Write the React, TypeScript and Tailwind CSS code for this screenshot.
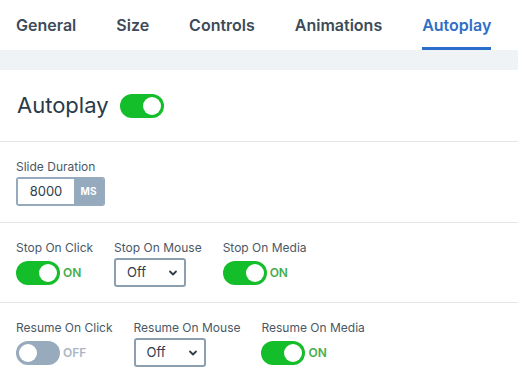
import React from "react";

const tabs = ["General", "Size", "Controls", "Animations", "Autoplay"];

function Toggle({ on }: { on: boolean }) {
  return (
    <span
      className={`relative inline-flex h-[24px] w-[44px] shrink-0 items-center rounded-full ${
        on ? "bg-[#14bd2a]" : "bg-[#97abbd]"
      }`}
    >
      <span
        className={`absolute top-[3px] h-[18px] w-[18px] rounded-full bg-white ${
          on ? "left-[23px]" : "left-[3px]"
        }`}
      />
    </span>
  );
}

function Switch({ on }: { on: boolean }) {
  return (
    <div className="flex h-[29px] items-center gap-[3px]">
      <Toggle on={on} />
      <span
        className={`text-[12px] font-semibold ${
          on ? "text-[#46ad4c]" : "text-[#a9b7c4]"
        }`}
      >
        {on ? "ON" : "OFF"}
      </span>
    </div>
  );
}

function Select() {
  return (
    <div className="flex h-[29px] w-[72px] items-center justify-between rounded-[3px] border-2 border-[#8c9fb0] bg-white pl-[11px] pr-[6px] text-[13px] text-[#2e3d4c]">
      <span>Off</span>
      <svg width="10" height="10" viewBox="0 0 10 10">
        <path d="M2 3.5 L5 6.5 L8 3.5" fill="none" stroke="#2e3d4c" strokeWidth="1.8" strokeLinecap="round" strokeLinejoin="round" />
      </svg>
    </div>
  );
}

function Field({ label, children }: { label: string; children: React.ReactNode }) {
  return (
    <div className="mr-[21px] flex flex-col">
      <div className="text-[12px] leading-[20px] text-[#4a5866]">{label}</div>
      {children}
    </div>
  );
}

export default function App() {
  return (
    <div className="h-[376px] w-[518px] overflow-hidden bg-white font-['Inter',sans-serif]">
      <div className="flex h-[50px] gap-[40px] pl-4">
        {tabs.map((t) => (
          <div
            key={t}
            className={`flex h-full items-center border-b-[3px] pt-[3px] text-[16px] font-semibold ${
              t === "Autoplay" ? "border-[#2a6dca] text-[#2f6fc6]" : "border-transparent text-[#3d4b59]"
            }`}
          >
            {t}
          </div>
        ))}
      </div>
      <div className="h-[20px] bg-[#f0f3f6]" />
      <div className="flex h-[72px] items-center gap-[11px] border-b border-[#e3e7ea] pl-[17px]">
        <span className="text-[22px] text-[#2a3a49]">Autoplay</span>
        <Toggle on />
      </div>
      <div className="border-b border-[#e3e7ea] pt-[15px] pb-[16px] pl-4">
        <div className="text-[12px] leading-[20px] text-[#4a5866]">Slide Duration</div>
        <div className="flex h-[29px] w-[89px] overflow-hidden rounded-[3px] border-2 border-[#95aabd]">
          <div className="flex w-[56px] items-center justify-center bg-white text-[13px] text-[#2e3d4c]">8000</div>
          <div className="flex flex-1 items-center justify-center bg-[#95aabd] text-[10px] font-bold text-white">MS</div>
        </div>
      </div>
      <div className="flex border-b border-[#e3e7ea] pt-[15px] pb-[15px] pl-4">
        <Field label="Stop On Click">
          <Switch on />
        </Field>
        <Field label="Stop On Mouse">
          <Select />
        </Field>
        <Field label="Stop On Media">
          <Switch on />
        </Field>
      </div>
      <div className="flex pt-[15px] pl-4">
        <Field label="Resume On Click">
          <Switch on={false} />
        </Field>
        <Field label="Resume On Mouse">
          <Select />
        </Field>
        <Field label="Resume On Media">
          <Switch on />
        </Field>
      </div>
    </div>
  );
}
